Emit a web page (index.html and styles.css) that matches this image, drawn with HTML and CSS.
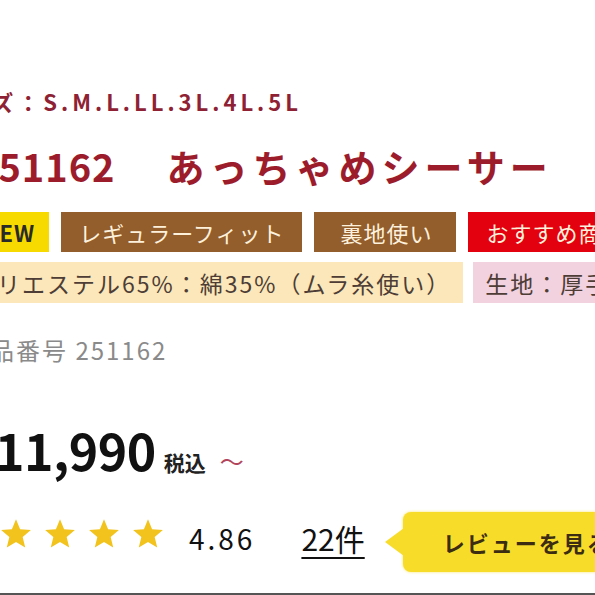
FILE: index.html
```html
<!DOCTYPE html>
<html lang="ja">
<head>
  <meta charset="UTF-8" />
  <meta name="viewport" content="width=device-width, initial-scale=1" />
  <title>251162 あっちゃめシーサー</title>
  <link rel="stylesheet" href="styles.css">
</head>
<body>
  <div class="product">
    <p class="sizes">サイズ：S.M.L.LL.3L.4L.5L</p>
    <h1 class="title"><span class="title-no">251162</span>　あっちゃめシーサー</h1>

    <!-- badges -->
    <div class="badges">
      <span class="badge badge-new">NEW</span>
      <span class="badge badge-brown">レギュラーフィット</span>
      <span class="badge badge-brown badge-wide">裏地使い</span>
      <span class="badge badge-red">おすすめ商品</span>
    </div>

    <div class="tags">
      <span class="tag tag-cream">ポリエステル65%：綿35%（ムラ糸使い）</span>
      <span class="tag tag-pink">生地：厚手</span>
    </div>

    <p class="code">商品番号 251162</p>

    <div class="price">
      <span class="price-num">¥11,990</span>
      <span class="price-tax">税込</span>
      <span class="price-tilde">～</span>
    </div>

    <div class="rating">
      <div class="stars">
        <svg class="star" viewBox="0 0 24 24"><polygon points="12,1.5 14.9,8.6 22.5,9.2 16.7,14.1 18.5,21.6 12,17.6 5.5,21.6 7.3,14.1 1.5,9.2 9.1,8.6" /></svg>
        <svg class="star" viewBox="0 0 24 24"><polygon points="12,1.5 14.9,8.6 22.5,9.2 16.7,14.1 18.5,21.6 12,17.6 5.5,21.6 7.3,14.1 1.5,9.2 9.1,8.6" /></svg>
        <svg class="star" viewBox="0 0 24 24"><polygon points="12,1.5 14.9,8.6 22.5,9.2 16.7,14.1 18.5,21.6 12,17.6 5.5,21.6 7.3,14.1 1.5,9.2 9.1,8.6" /></svg>
        <svg class="star" viewBox="0 0 24 24"><polygon points="12,1.5 14.9,8.6 22.5,9.2 16.7,14.1 18.5,21.6 12,17.6 5.5,21.6 7.3,14.1 1.5,9.2 9.1,8.6" /></svg>
        <svg class="star" viewBox="0 0 24 24"><polygon points="12,1.5 14.9,8.6 22.5,9.2 16.7,14.1 18.5,21.6 12,17.6 5.5,21.6 7.3,14.1 1.5,9.2 9.1,8.6" /></svg>
      </div>
      <span class="score">4.86</span>
      <a class="count" href="#reviews">22件</a>
      <a class="review-btn" href="#reviews">レビューを見る</a>
    </div>
  </div>
  <div class="bottom-line"></div>
</body>
</html>
```

FILE: styles.css
```css
body {
  margin: 0;
  padding: 0;
  background: #fff;
  font-family: "Noto Sans CJK JP", "Noto Sans", sans-serif;
  color: #222;
  overflow: hidden;
  width: 595px;
  height: 595px;
}

.product {
  margin-left: -34px;
  white-space: nowrap;
}

.sizes {
  margin: 86px 0 0 -26px;
  font-size: 22px;
  line-height: 30px;
  font-weight: 700;
  letter-spacing: 4px;
  color: #8e2234;
}

.title {
  margin: 25px 0 0 9px;
  font-size: 38px;
  line-height: 50px;
  font-weight: 700;
  letter-spacing: 5px;
  color: #9d1c2c;
}

.title-no {
  letter-spacing: 1px;
  margin-right: 8px;
}

.badges {
  display: flex;
  gap: 12px;
  margin-top: 21px;
}

.badge {
  display: flex;
  align-items: center;
  height: 40px;
  padding: 0 18px;
  font-size: 22px;
  letter-spacing: 1px;
  color: #fdf1dc;
}

.badge-new {
  background: #f7da00;
  color: #2a2a2a;
  font-weight: 700;
  padding: 0 14px 0 16px;
}

.badge-brown {
  background: #935d2c;
}

.badge-wide {
  padding: 0 24px 0 26px;
}

.badge-red {
  background: #e3000f;
}

.tags {
  display: flex;
  gap: 10px;
  margin-top: 10px;
}

.tag {
  display: flex;
  align-items: center;
  height: 41px;
  padding: 0 12px;
  font-size: 23px;
  letter-spacing: 2px;
  color: #4d3d36;
}

.tag-cream {
  background: #fbe7b9;
  margin-left: -6px;
}

.tag-pink {
  background: #f3d2e0;
}

.code {
  margin: 32px 0 0 -2px;
  font-size: 24px;
  line-height: 30px;
  letter-spacing: 2px;
  color: #8a8a8a;
}

.price {
  display: flex;
  align-items: baseline;
  margin-top: 54px;
  height: 60px;
}

.price-num {
  font-size: 50px;
  font-weight: 700;
  line-height: 60px;
  letter-spacing: -0.5px;
  color: #111;
}

.price-tax {
  margin-left: 8px;
  font-size: 21px;
  font-weight: 700;
  color: #222;
}

.price-tilde {
  margin-left: 14px;
  font-size: 24px;
  color: #b2455c;
}

.rating {
  display: flex;
  align-items: center;
  height: 60px;
  margin-top: 33px;
  margin-left: -11px;
}

.stars {
  display: flex;
  gap: 10px;
  margin-bottom: 16px;
}

.star {
  width: 34px;
  height: 34px;
  fill: #f1c31c;
}

.score {
  margin: 0 0 8px 24px;
  font-size: 28px;
  letter-spacing: 3px;
  color: #111;
}

.count {
  margin: 0 0 8px 46px;
  font-size: 30px;
  color: #111;
  text-decoration: underline;
  text-underline-offset: 6px;
  text-decoration-thickness: 2px;
}

.review-btn {
  position: relative;
  display: flex;
  align-items: center;
  height: 60px;
  margin-left: 38px;
  padding: 0 40px 0 40px;
  background: #f8dc2a;
  border-radius: 8px;
  box-shadow: 0 0 3px rgba(248, 220, 42, 0.7);
  font-size: 22px;
  font-weight: 700;
  letter-spacing: 2px;
  color: #3b2c12;
  text-decoration: none;
}

.review-btn::before {
  content: "";
  position: absolute;
  left: -18px;
  top: 16px;
  border-style: solid;
  border-width: 14px 19px 14px 0;
  border-color: transparent #f8dc2a transparent transparent;
}

.bottom-line {
  margin-top: 21px;
  height: 3px;
  background: #555;
}
```
